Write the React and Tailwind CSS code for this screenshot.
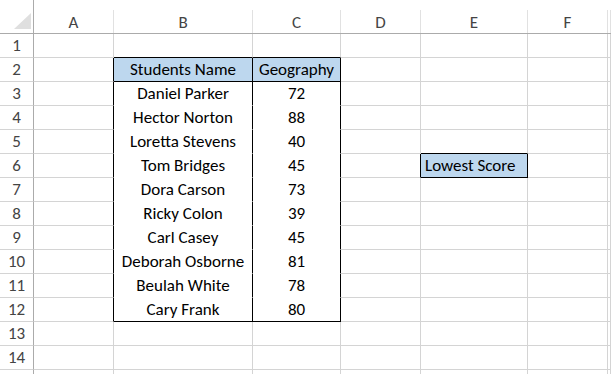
const cols = ['A', 'B', 'C', 'D', 'E', 'F', '']
const colW = ['w-[80px]', 'w-[139px]', 'w-[88px]', 'w-[80px]', 'w-[107px]', 'w-[80px]', 'flex-1']

const students = [
  ['Daniel Parker', 72],
  ['Hector Norton', 88],
  ['Loretta Stevens', 40],
  ['Tom Bridges', 45],
  ['Dora Carson', 73],
  ['Ricky Colon', 39],
  ['Carl Casey', 45],
  ['Deborah Osborne', 81],
  ['Beulah White', 78],
  ['Cary Frank', 80],
]

const Corner = () => (
  <svg width="34" height="34" viewBox="0 0 34 34">
    <polygon points="14,29 31,29 31,13" fill="#dfdfdf" />
  </svg>
)

// which cell gets which look, row is 1-based, col is 0-based (A = 0)
function cellStyle(row, col) {
  let right = 'border-r-[#d4d4d4]'
  let bottom = 'border-b-[#d4d4d4]'
  let bg = ''
  let text = 'justify-center'
  const inTable = row >= 2 && row <= 12 && (col === 1 || col === 2)

  if (inTable) {
    right = 'border-r-black'
    bottom = row === 2 || row === 12 ? 'border-b-black' : 'border-b-white'
    if (row === 2) bg = 'bg-[#bdd7ee]'
  }
  if (col === 0 && row >= 2 && row <= 12) right = 'border-r-black'
  if (row === 1 && (col === 1 || col === 2)) bottom = 'border-b-black'

  // Lowest Score box at E6
  if (row === 6 && col === 4) {
    right = 'border-r-black'
    bottom = 'border-b-black'
    bg = 'bg-[#bdd7ee]'
    text = 'justify-start pl-[4px]'
  }
  if (row === 6 && col === 3) right = 'border-r-black'
  if (row === 5 && col === 4) bottom = 'border-b-black'

  return `${right} ${bottom} ${bg} ${text}`
}

function content(row, col) {
  if (row === 2 && col === 1) return 'Students Name'
  if (row === 2 && col === 2) return 'Geography'
  if (row >= 3 && row <= 12) {
    const s = students[row - 3]
    if (col === 1) return s[0]
    if (col === 2) return s[1]
  }
  if (row === 6 && col === 4) return 'Lowest Score'
  return ''
}

const rows = Array.from({ length: 15 }, (_, i) => i + 1)

export default function App() {
  return (
    <div
      className="w-[611px] h-[374px] overflow-hidden bg-white text-[17px] leading-none text-black"
      style={{ fontFamily: 'Carlito, Lato, "Open Sans", sans-serif' }}
    >
      <div className="flex h-[34px] border-b border-b-[#ababab]">
        <div className="w-[34px] shrink-0 border-r border-r-[#ababab]">
          <Corner />
        </div>
        {cols.map((c, i) => (
          <div key={i} className={`${colW[i]} shrink-0 flex flex-col`}>
            <div className="h-[10px]" />
            <div className="flex-1 flex items-center justify-center border-r border-r-[#e1e1e1] text-[#444] pt-[1px]">
              {c}
            </div>
          </div>
        ))}
      </div>
      {rows.map((r) => (
        <div key={r} className="flex h-[24px]">
          <div className="w-[34px] shrink-0 flex items-center justify-center border-r border-r-[#ababab] border-b border-b-[#d4d4d4] text-[#444]">
            {r < 15 ? r : ''}
          </div>
          {cols.map((c, i) => (
            <div
              key={i}
              className={`${colW[i]} shrink-0 flex items-center border-r border-b whitespace-nowrap ${cellStyle(r, i)}`}
            >
              {content(r, i)}
            </div>
          ))}
        </div>
      ))}
    </div>
  )
}
